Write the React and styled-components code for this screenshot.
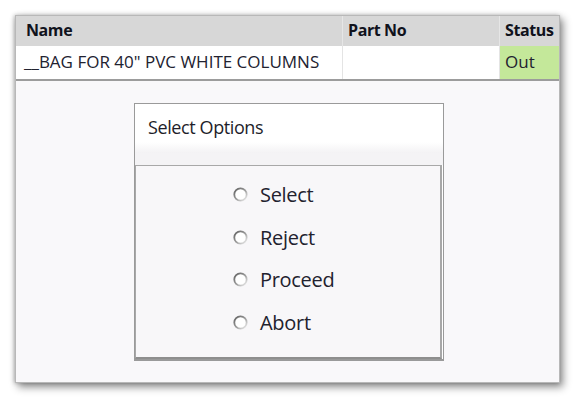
import React from 'react'
import styled, { createGlobalStyle } from 'styled-components'

const GlobalStyle = createGlobalStyle`
  html, body {
    margin: 0;
    padding: 0;
    background: #ffffff;
  }
  body {
    font-family: 'Open Sans', 'Noto Sans', sans-serif;
    color: #1e1e28;
  }
`

const Page = styled.div`
  width: 576px;
  height: 399px;
  padding: 15px 0 0 15px;
  box-sizing: border-box;
`

const Window = styled.div`
  width: 545px;
  height: 368px;
  background: #f9f8fa;
  border: 1px solid #b8b8b8;
  box-sizing: border-box;
  box-shadow: 3px 4px 8px rgba(0, 0, 0, 0.45), -1px 0 4px rgba(0, 0, 0, 0.25);
  display: flex;
  flex-direction: column;
`

const Table = styled.div`
  display: grid;
  grid-template-columns: 327px 157px 1fr;
  border-bottom: 2px solid #9c9c9c;
`

const HeadCell = styled.div`
  height: 30px;
  box-sizing: border-box;
  display: flex;
  align-items: center;
  padding: 0 0 3px ${p => p.$pad || 10}px;
  background: #d7d7d7;
  border-right: ${p => (p.$last ? 'none' : '1px solid #e6e6e6')};
  font-weight: 700;
  font-size: 16px;
  letter-spacing: -0.4px;
  color: #10121c;
`

const Cell = styled.div`
  height: 33px;
  box-sizing: border-box;
  display: flex;
  align-items: center;
  padding: 0 0 3px ${p => p.$pad || 8}px;
  background: ${p => (p.$status ? '#c4e89a' : '#ffffff')};
  border-right: ${p => (p.$last ? 'none' : '1px solid #e4e4e4')};
  font-size: 17px;
  letter-spacing: 0;
  color: #222230;
`

const Dialog = styled.div`
  margin: 22px 0 0 118px;
  width: 310px;
  height: 258px;
  border: 1px solid #9a9a9a;
  border-bottom-width: 2px;
  box-sizing: border-box;
  background: #ffffff;
  display: flex;
  flex-direction: column;
`

const Title = styled.div`
  height: 49px;
  box-sizing: border-box;
  display: flex;
  align-items: center;
  padding: 0 0 4px 13px;
  font-size: 18px;
  letter-spacing: -0.4px;
  color: #1e1e2a;
  background: linear-gradient(#ffffff 0, #ffffff 78%, #f3f2f4 100%);
`

const Strip = styled.div`
  height: 12px;
  background: #f4f3f5;
`

const Panel = styled.div`
  flex: 1;
  margin-right: 1px;
  border: 1px solid #a8a8a8;
  border-right-width: 2px;
  border-bottom: 2px solid #8e8e8e;
  background: #f8f7f9;
  padding: 16px 0 0 97px;
  display: flex;
  flex-direction: column;
  gap: 17.5px;
`

const Option = styled.label`
  display: flex;
  align-items: center;
  gap: 12px;
  height: 25px;
  font-size: 20px;
  letter-spacing: -0.3px;
  color: #22222e;
`

const Radio = () => (
  <svg width="15" height="15" viewBox="0 0 15 15">
    <defs>
      <linearGradient id="rg" x1="0" y1="0" x2="1" y2="1">
        <stop offset="0" stopColor="#5e5e5e" />
        <stop offset="0.55" stopColor="#a0a0a0" />
        <stop offset="1" stopColor="#f4f4f4" />
      </linearGradient>
    </defs>
    <circle cx="7.5" cy="7.5" r="6.2" fill="#ffffff" stroke="url(#rg)" strokeWidth="1.8" />
  </svg>
)

const options = ['Select', 'Reject', 'Proceed', 'Abort']

export default function App() {
  return (
    <>
      <GlobalStyle />
      <Page>
        <Window>
          <Table>
            <HeadCell $pad={10}>Name</HeadCell>
            <HeadCell $pad={5}>Part No</HeadCell>
            <HeadCell $pad={5} $last>Status</HeadCell>
            <Cell>__BAG FOR 40" PVC WHITE COLUMNS</Cell>
            <Cell />
            <Cell $pad={5} $status $last>Out</Cell>
          </Table>
          <Dialog>
            <Title>Select Options</Title>
            <Strip />
            <Panel>
              {options.map(o => (
                <Option key={o}>
                  <Radio />
                  {o}
                </Option>
              ))}
            </Panel>
          </Dialog>
        </Window>
      </Page>
    </>
  )
}
